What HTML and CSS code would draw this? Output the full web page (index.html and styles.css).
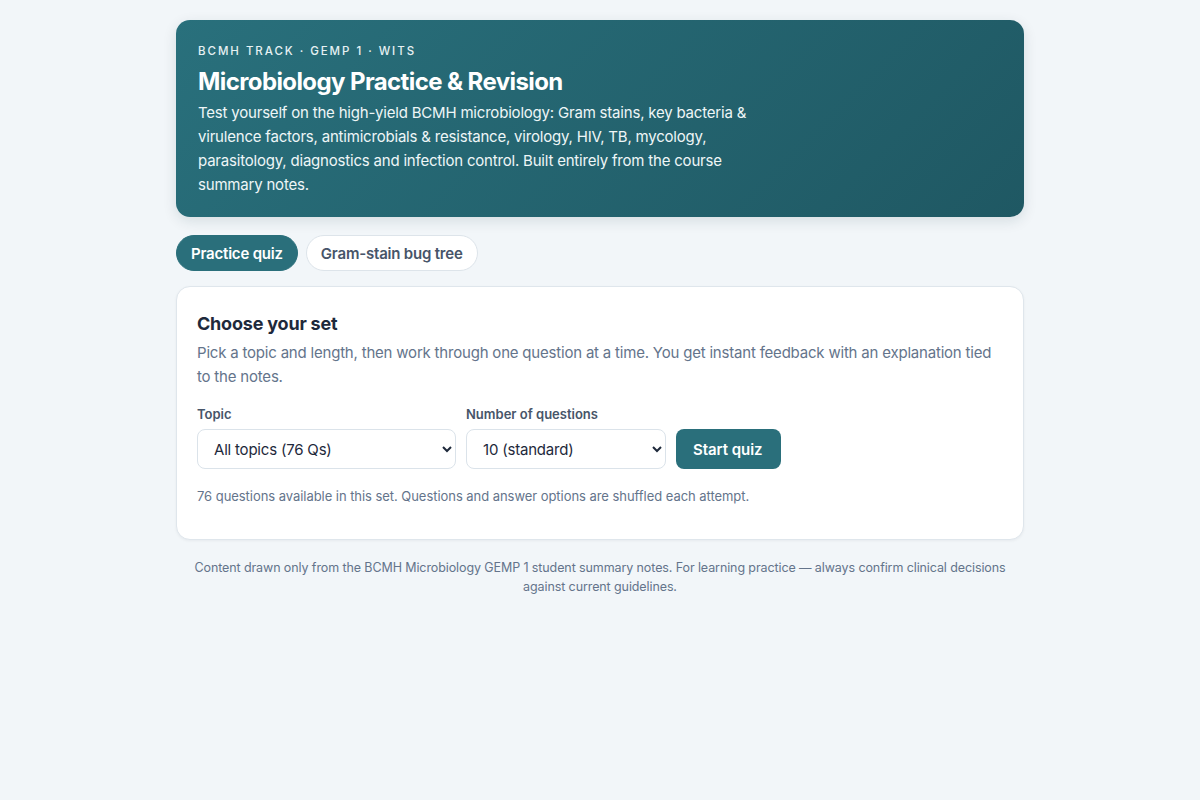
FILE: index.html
```html
<!DOCTYPE html>
<html lang="en">
<head>
<meta charset="utf-8">
<title>Microbiology Practice &amp; Revision</title>
<link rel="stylesheet" href="styles.css">
</head>
<body>
<main class="wrap">
  <header class="hero">
    <div class="eyebrow">BCMH Track · GEMP 1 · Wits</div>
    <h1 class="hero-title">Microbiology Practice &amp; Revision</h1>
    <p class="hero-text">Test yourself on the high-yield BCMH microbiology: Gram stains, key bacteria &amp; virulence factors, antimicrobials &amp; resistance, virology, HIV, TB, mycology, parasitology, diagnostics and infection control. Built entirely from the course summary notes.</p>
  </header>

  <nav class="tabs">
    <button class="tab tab-active">Practice quiz</button>
    <button class="tab">Gram-stain bug tree</button>
  </nav>

  <section class="card">
    <h2 class="card-title">Choose your set</h2>
    <p class="card-desc">Pick a topic and length, then work through one question at a time. You get instant feedback with an explanation tied to the notes.</p>
    <div class="controls">
      <label class="field field-topic">
        <span class="label">Topic</span>
        <select class="select">
          <option>All topics (76 Qs)</option>
        </select>
      </label>
      <label class="field field-num">
        <span class="label">Number of questions</span>
        <select class="select">
          <option>10 (standard)</option>
        </select>
      </label>
      <button class="btn">Start quiz</button>
    </div>
    <p class="note">76 questions available in this set. Questions and answer options are shuffled each attempt.</p>
  </section>

  <footer class="foot">Content drawn only from the BCMH Microbiology GEMP 1 student summary notes. For learning practice — always confirm clinical decisions against current guidelines.</footer>
</main>
</body>
</html>
```

FILE: styles.css
```css
* { box-sizing: border-box; }
html, body { margin: 0; padding: 0; }
body {
  background: #f2f6f9;
  font-family: Inter, "Noto Sans", "Liberation Sans", sans-serif;
  color: #1e293b;
}
.wrap {
  width: 848px;
  margin: 0 auto;
  padding: 20px 0 40px;
}
.hero {
  background: linear-gradient(135deg, #29707c 0%, #1f5863 100%);
  border-radius: 14px;
  padding: 24px 22px 20px;
  color: #fff;
  box-shadow: 0 4px 14px rgba(15, 50, 60, 0.12);
}
.eyebrow {
  font-size: 11.5px;
  font-weight: 500;
  text-transform: uppercase;
  letter-spacing: 0.17em;
  line-height: 14px;
  color: #e6f1f3;
}
.hero-title {
  margin: 9px 0 4px;
  font-size: 24px;
  font-weight: 700;
  line-height: 30px;
  letter-spacing: -0.025em;
}
.hero-text {
  margin: 0;
  font-size: 15px;
  line-height: 24px;
  max-width: 560px;
  letter-spacing: -0.2px;
  color: #eef6f7;
}
.tabs {
  display: flex;
  gap: 8px;
  margin: 18px 0 15px;
}
.tab {
  font-family: inherit;
  font-size: 15px;
  font-weight: 600;
  letter-spacing: -0.2px;
  height: 36px;
  padding: 0 14px;
  border-radius: 999px;
  border: 1px solid #dde4ea;
  background: #fff;
  color: #475569;
  cursor: pointer;
}
.tab-active {
  background: #2a6f7b;
  border-color: #2a6f7b;
  color: #fff;
}
.card {
  background: #fff;
  border: 1px solid #dfe6ec;
  border-radius: 14px;
  padding: 25px 20px 34px;
  box-shadow: 0 1px 3px rgba(15, 23, 42, 0.05);
}
.card-title {
  margin: 0 0 5px;
  font-size: 18px;
  font-weight: 700;
  line-height: 24px;
  letter-spacing: -0.2px;
  color: #1e293b;
}
.card-desc {
  margin: 0 0 16px;
  font-size: 15px;
  line-height: 24px;
  letter-spacing: -0.2px;
  color: #64748b;
}
.controls {
  display: flex;
  align-items: flex-end;
  gap: 10px;
}
.field {
  display: flex;
  flex-direction: column;
  gap: 6px;
}
.field-topic { width: 259px; }
.field-num { width: 200px; }
.label {
  font-size: 13px;
  font-weight: 600;
  line-height: 18px;
  color: #475569;
}
.select {
  height: 40px;
  width: 100%;
  font-family: inherit;
  font-size: 15px;
  letter-spacing: -0.2px;
  color: #1e293b;
  background: #fff;
  border: 1px solid #dbe3ea;
  border-radius: 8px;
  padding: 0 8px 0 12px;
}
.btn {
  height: 40px;
  padding: 0 18px 0 17px;
  font-family: inherit;
  font-size: 15px;
  font-weight: 600;
  letter-spacing: -0.05px;
  color: #fff;
  background: #2a6f7b;
  border: none;
  border-radius: 8px;
  cursor: pointer;
}
.note {
  margin: 18px 0 0;
  font-size: 13px;
  line-height: 18px;
  letter-spacing: -0.05px;
  color: #64748b;
}
.foot {
  margin: 19px 0 0;
  text-align: center;
  font-size: 12.5px;
  line-height: 18.5px;
  letter-spacing: -0.1px;
  color: #64748b;
}
```
